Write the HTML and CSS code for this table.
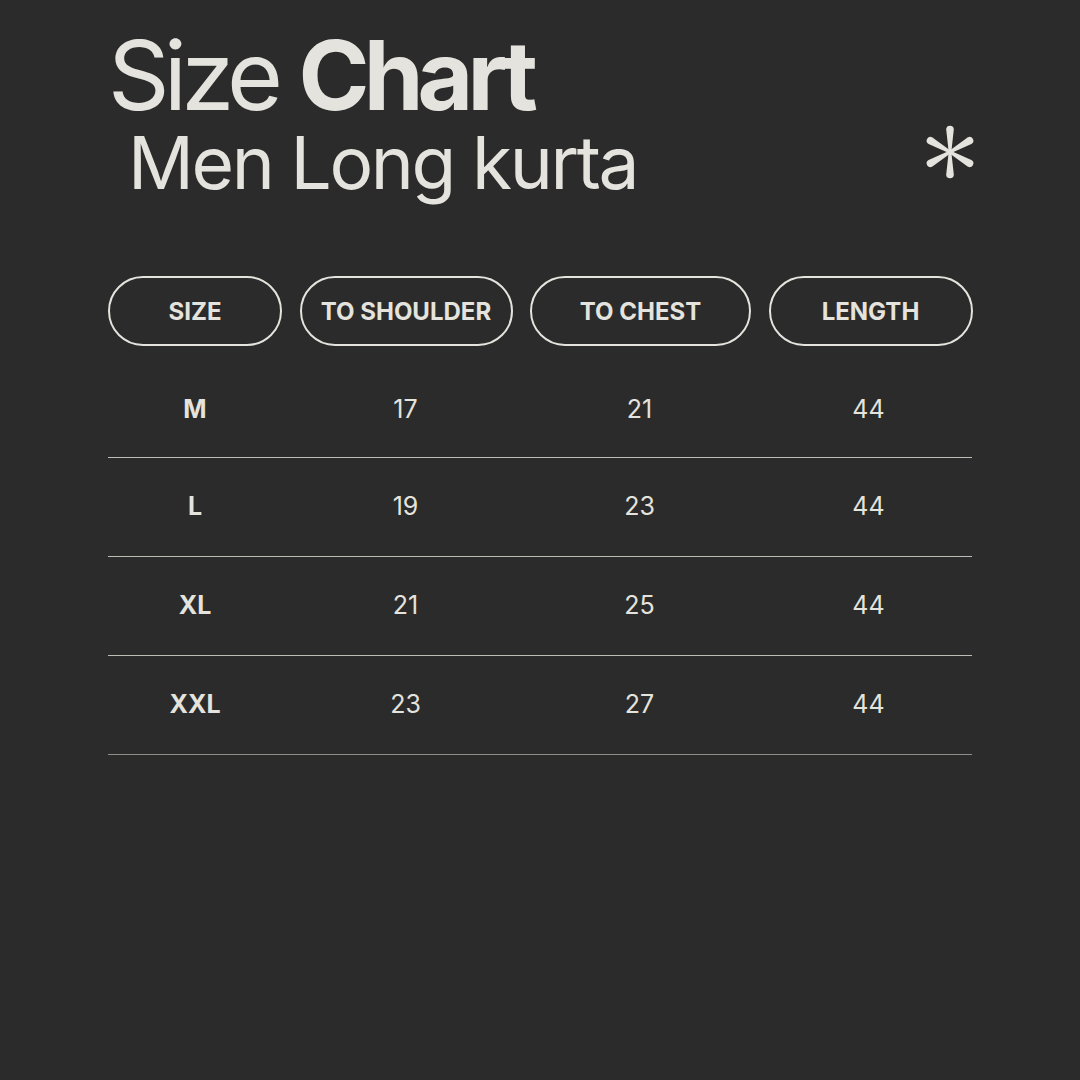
FILE: index.html
```html
<!DOCTYPE html>
<html lang="en">
<head>
<meta charset="utf-8">
<title>Size Chart</title>
<link rel="stylesheet" href="styles.css">
</head>
<body>
<main class="page">
  <h1 class="title">Size <b>Chart</b></h1>
  <div class="sub-row">
    <h2 class="subtitle">Men Long kurta</h2>
    <svg class="asterisk" width="52" height="58" viewBox="0 0 52 58" aria-hidden="true">
      <g fill="#e4e3dd" transform="translate(26 29)">
        <path id="spoke" d="M -1.3 0 L -3.8 -22.5 A 3.8 3.8 0 0 1 3.8 -22.5 L 1.3 0 Z"/>
        <use href="#spoke" transform="rotate(60)"/>
        <use href="#spoke" transform="rotate(120)"/>
        <use href="#spoke" transform="rotate(180)"/>
        <use href="#spoke" transform="rotate(240)"/>
        <use href="#spoke" transform="rotate(300)"/>
      </g>
    </svg>
  </div>

  <div class="chart">
    <div class="head">
      <div class="pill">SIZE</div>
      <div class="pill">TO SHOULDER</div>
      <div class="pill">TO CHEST</div>
      <div class="pill">LENGTH</div>
    </div>
    <div class="row first"><span class="size">M</span><span>17</span><span>21</span><span>44</span></div>
    <div class="row"><span class="size">L</span><span>19</span><span>23</span><span>44</span></div>
    <div class="row"><span class="size">XL</span><span>21</span><span>25</span><span>44</span></div>
    <div class="row last"><span class="size">XXL</span><span>23</span><span>27</span><span>44</span></div>
  </div>
</main>
</body>
</html>
```
FILE: styles.css
```css
* { box-sizing: border-box; }
html, body {
  margin: 0;
  padding: 0;
  background: #2b2b2b;
}
body {
  width: 1080px;
  height: 1080px;
  color: #e4e3dd;
  font-family: Inter, "Noto Sans", "Liberation Sans", sans-serif;
}
.page {
  padding: 27px 108px 0 108px;
}
.title {
  margin: 0;
  font-size: 96px;
  line-height: 96px;
  font-weight: 400;
  letter-spacing: -5.8px;
}
.title b {
  font-weight: 700;
}
.sub-row {
  margin-top: 3px;
  display: flex;
  justify-content: space-between;
  align-items: flex-start;
}
.subtitle {
  margin: 0 0 0 20px;
  font-size: 73px;
  line-height: 73px;
  font-weight: 400;
  letter-spacing: -2.4px;
}
.asterisk {
  margin-top: -3px;
  margin-right: -4px;
}
.chart {
  margin-top: 77px;
  width: 864px;
}
.head, .row {
  display: grid;
  grid-template-columns: 174px 213px 221px 203px;
  column-gap: 17px;
}
.head {
  grid-template-columns: 174px 213px 221px 204px;
  column-gap: 17.5px;
}
.pill {
  height: 70px;
  border: 2px solid #e4e3dd;
  border-radius: 35px;
  display: flex;
  align-items: center;
  justify-content: center;
  font-size: 24px;
  font-weight: 700;
  letter-spacing: 0;
}
.head {
  margin-bottom: 13px;
}
.row {
  height: 99px;
  align-items: center;
  border-bottom: 1px solid #bdbcb6;
  font-size: 25px;
  font-weight: 400;
}
.row span {
  text-align: center;
  padding-bottom: 2px;
}
.row.first span {
  padding-bottom: 0;
  padding-top: 2px;
}
.row .size {
  font-weight: 700;
}
.row.last {
  border-bottom: 1.5px solid #8e8d88;
}
```
